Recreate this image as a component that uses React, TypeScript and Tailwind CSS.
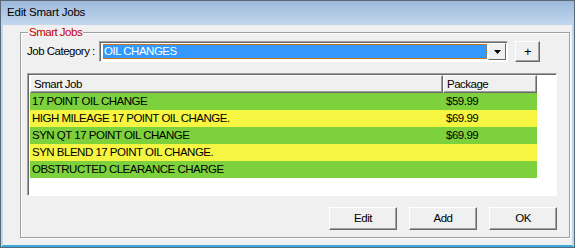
import React from "react";

const jobs = [
  { name: "17 POINT OIL CHANGE", price: "$59.99", color: "bg-[#7dd13c]" },
  { name: "HIGH MILEAGE 17 POINT OIL CHANGE.", price: "$69.99", color: "bg-[#f5f542]" },
  { name: "SYN QT 17 POINT OIL CHANGE", price: "$69.99", color: "bg-[#7dd13c]" },
  { name: "SYN BLEND 17 POINT OIL CHANGE.", price: "", color: "bg-[#f5f542]" },
  { name: "OBSTRUCTED CLEARANCE CHARGE", price: "", color: "bg-[#7dd13c]" },
];

function WinButton({ children, className = "" }: { children: React.ReactNode; className?: string }) {
  return (
    <button
      className={`flex items-center justify-center bg-[#f0f0f0] border border-t-white border-l-white border-r-[#696969] border-b-[#696969] shadow-[inset_-1px_-1px_0_#a0a0a0] text-black ${className}`}
    >
      {children}
    </button>
  );
}

export default function App() {
  return (
    <div
      className="w-[575px] h-[248px] flex flex-col bg-[#f0f0f0] border border-[#5b6878] text-[11.5px] tracking-[-0.5px] text-black overflow-hidden"
      style={{ fontFamily: '"Liberation Sans", Arial, sans-serif' }}
    >
      {/* title bar */}
      <div className="h-[24px] shrink-0 flex items-center pl-[6px] bg-gradient-to-b from-[#9db9da] to-[#c2d7ee] text-[11.5px] tracking-[-0.2px]">
        Edit Smart Jobs
      </div>

      {/* body */}
      <div className="flex-1 flex flex-col border-x-2 border-b-2 border-x-[#c2d7ee] border-b-[#39a9dc] bg-[#f0f0f0]">
        <div className="relative ml-[17px] mt-[7px] w-[550px] h-[206px] border border-[#a0a0a0] shadow-[inset_1px_1px_0_#fff,1px_1px_0_#fff] pl-[6px] pt-[8px] flex flex-col">
          <span className="absolute -top-[7px] left-[7px] bg-[#f0f0f0] px-[1px] leading-[13px] text-[#c00000]">
            Smart Jobs
          </span>

          {/* category row */}
          <div className="flex items-start h-[21px]">
            <span className="w-[72px] leading-[21px]">Job Category :</span>
            <div className="w-[409px] h-[21px] flex bg-white border border-t-[#a0a0a0] border-l-[#a0a0a0] border-r-white border-b-white shadow-[inset_1px_1px_0_#696969] p-[2px] pl-[3px]">
              <div className="flex-1 bg-[#3399ff] text-white leading-[14px] pl-[1px] outline-1 outline-dotted outline-[#c07020] -outline-offset-1">
                OIL CHANGES
              </div>
              <div className="w-[18px] -my-[1px] -mr-[1px] ml-[1px] bg-[#f0f0f0] border border-t-white border-l-white border-r-[#696969] border-b-[#696969] flex items-center justify-center">
                <svg width="7" height="4" viewBox="0 0 7 4">
                  <path d="M0 0h7L3.5 4z" fill="#000" />
                </svg>
              </div>
            </div>
            <WinButton className="ml-[7px] w-[25px] h-[21px] text-[13px] leading-none">+</WinButton>
          </div>

          {/* list */}
          <div className="mt-[11px] w-[530px] h-[123px] bg-white border border-t-[#a0a0a0] border-l-[#a0a0a0] border-r-white border-b-white shadow-[inset_1px_1px_0_#696969] pl-[2px] pt-[1px]">
            <div className="flex h-[18px]">
              <div className="w-[413px] pl-[3px] leading-[16px] bg-[#f0f0f0] border border-t-white border-l-white border-r-[#696969] border-b-[#696969] shadow-[inset_-1px_-1px_0_#a0a0a0]">
                Smart Job
              </div>
              <div className="w-[94px] pl-[3px] leading-[16px] bg-[#f0f0f0] border border-t-white border-l-white border-r-[#696969] border-b-[#696969] shadow-[inset_-1px_-1px_0_#a0a0a0]">
                Package
              </div>
            </div>
            {jobs.map((j) => (
              <div key={j.name} className={`flex h-[17px] w-[507px] leading-[17px] ${j.color}`}>
                <div className="w-[413px] pl-[2px]">{j.name}</div>
                <div className="w-[94px] pl-[3px]">{j.price}</div>
              </div>
            ))}
          </div>

          {/* buttons */}
          <div className="mt-[11px] w-[530px] flex justify-end gap-[12px]">
            <WinButton className="w-[68px] h-[23px]">Edit</WinButton>
            <WinButton className="w-[68px] h-[23px]">Add</WinButton>
            <WinButton className="w-[68px] h-[23px]">OK</WinButton>
          </div>
        </div>
      </div>
    </div>
  );
}
